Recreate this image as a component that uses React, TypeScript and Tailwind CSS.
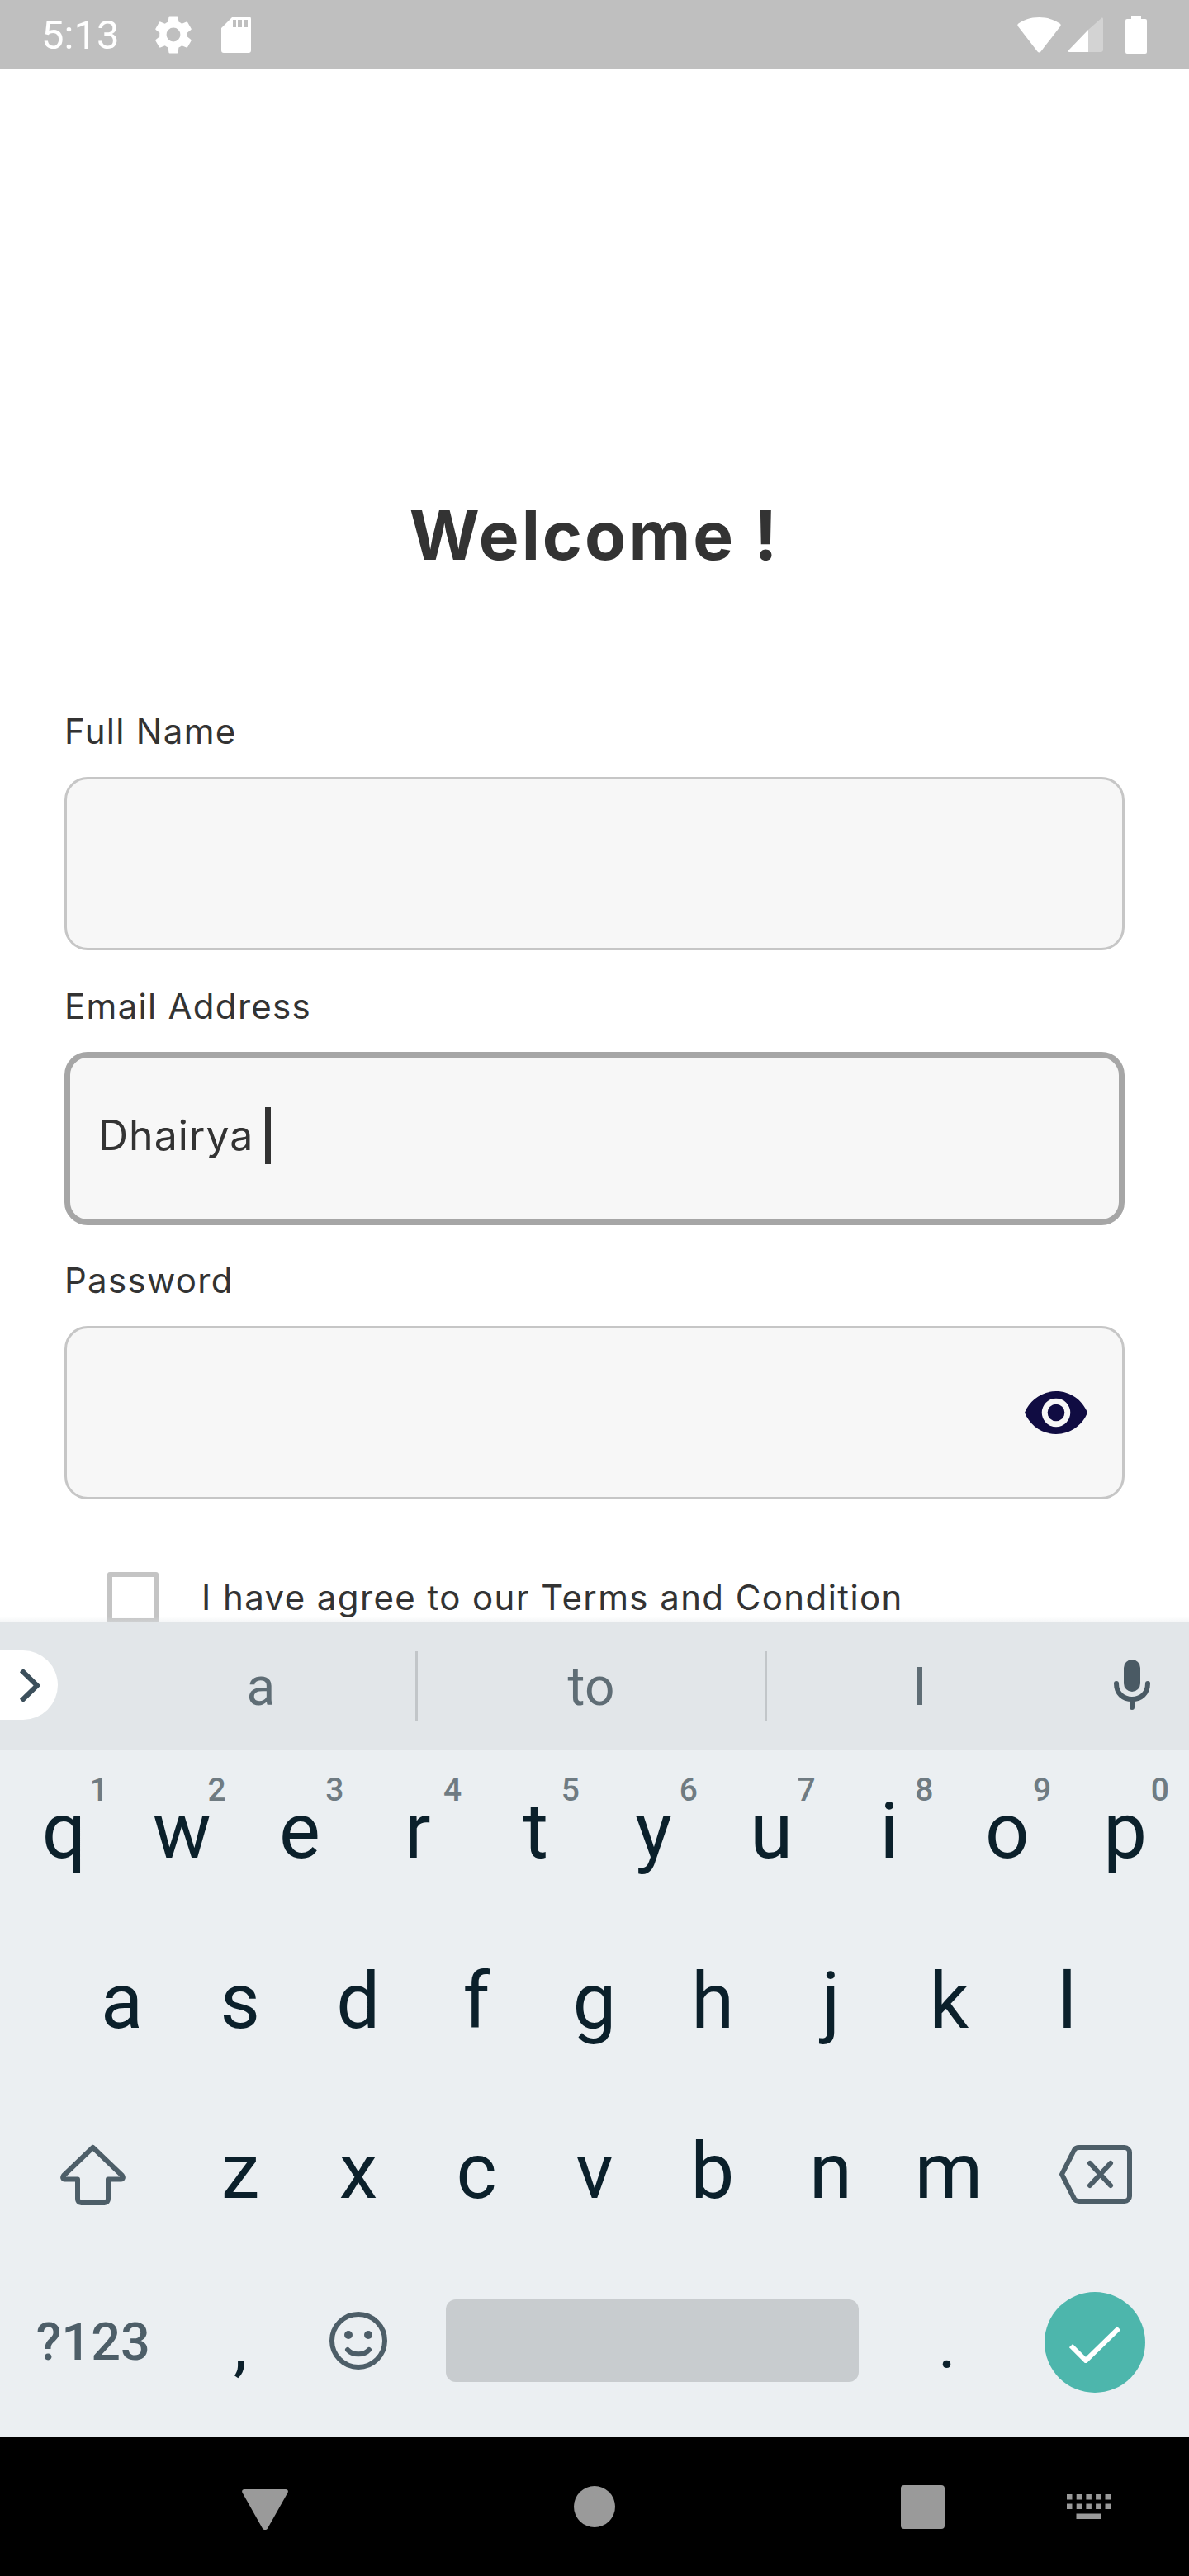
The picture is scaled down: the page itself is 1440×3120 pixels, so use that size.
import React from "react";

const Key = ({ c, sup }: { c: string; sup?: string }) => (
  <div className="relative flex items-center justify-center h-full pb-[8px]">
    <span className="text-[#0b202b] text-[94px] leading-none font-[Roboto,sans-serif]">{c}</span>
    {sup && (
      <span className="absolute right-[18px] top-[30px] text-[#6f7b82] text-[39px] leading-none font-medium font-[Roboto,sans-serif]">{sup}</span>
    )}
  </div>
);

const Field = ({ label, focused, children }: { label: string; focused?: boolean; children?: React.ReactNode }) => (
  <div className="flex flex-col">
    <label className="h-[83px] text-[#333333] text-[42px] leading-[56px] tracking-[1.3px] font-[Inter,sans-serif]">{label}</label>
    <div className={focused
      ? "h-[210px] w-[1284px] rounded-[28px] bg-[#f7f7f7] border-[7px] border-[#a6a6a6] flex items-center justify-between pl-[34px] pr-[38px] pb-[7px]"
      : "h-[210px] w-[1284px] rounded-[28px] bg-[#f7f7f7] border-[3px] border-[#c6c6c6] flex items-center justify-between pl-[38px] pr-[42px]"}>
      {children}
    </div>
  </div>
);

export default function App() {
  return (
    <div className="w-[1440px] h-[3120px] flex flex-col bg-white overflow-hidden">
      {/* status bar */}
      <div className="h-[84px] shrink-0 bg-[#bfbfbf] flex items-center pl-[50px] pr-[51px] text-white">
        <span className="text-[49px] leading-none font-[Roboto,sans-serif] w-[132px]">5:13</span>
        <svg viewBox="0 0 24 24" className="w-[56px] h-[56px] fill-white">
          <path d="M19.14 12.94c.04-.3.06-.61.06-.94 0-.32-.02-.64-.07-.94l2.03-1.58a.49.49 0 0 0 .12-.61l-1.92-3.32a.49.49 0 0 0-.59-.22l-2.39.96c-.5-.38-1.03-.7-1.62-.94l-.36-2.54a.48.48 0 0 0-.48-.41h-3.84a.48.48 0 0 0-.47.41l-.36 2.54c-.59.24-1.13.57-1.62.94l-2.39-.96a.49.49 0 0 0-.59.22L2.74 8.87c-.12.21-.08.47.12.61l2.03 1.58c-.05.3-.09.63-.09.94s.02.64.07.94l-2.03 1.58a.49.49 0 0 0-.12.61l1.92 3.32c.12.22.37.29.59.22l2.39-.96c.5.38 1.03.7 1.62.94l.36 2.54c.05.24.24.41.48.41h3.84c.24 0 .44-.17.47-.41l.36-2.54c.59-.24 1.13-.56 1.62-.94l2.39.96c.22.08.47 0 .59-.22l1.92-3.32c.12-.22.07-.47-.12-.61l-2.01-1.58zM12 15.6A3.6 3.6 0 1 1 12 8.4a3.6 3.6 0 0 1 0 7.2z" />
        </svg>
        <svg viewBox="0 0 36 44" className="w-[36px] h-[44px] fill-white ml-[30px]">
          <path fillRule="evenodd" d="M14 0h19a3 3 0 0 1 3 3v38a3 3 0 0 1-3 3H3a3 3 0 0 1-3-3V14zM14 4v9h4V4zM20 4v9h5V4zM27 4v9h5V4z" />
        </svg>
        <div className="flex-1" />
        <svg viewBox="0 0 54 44" className="w-[53px] h-[43px] fill-white mr-[8px]">
          <path d="M27 0C16 0 7 3.500 1 8c-1 .8-1 2-.3 3L25 42.500c1 1.300 3 1.300 4 0L53.300 11c.7-1 .7-2.200-.3-3C47 3.500 38 0 27 0z" />
        </svg>
        <svg viewBox="0 0 43 42" className="w-[43px] h-[42px] mr-[27px]">
          <path d="M25 15 41 1c1-1 2 0 2 1v37a3 3 0 0 1-3 3H25z" fill="#d3d3d3" />
          <path d="M25 15v27H2c-1.500 0-2-1-1-2z" fill="#ffffff" />
        </svg>
        <svg viewBox="0 0 26 46" className="w-[26px] h-[46px] fill-white">
          <path d="M7 0h12v4h5a2 2 0 0 1 2 2v38a2 2 0 0 1-2 2H2a2 2 0 0 1-2-2V6a2 2 0 0 1 2-2h5z" />
        </svg>
      </div>

      {/* form */}
      <div className="h-[1881px] shrink-0 relative overflow-hidden">
        <h1 className="text-center mt-[505px] h-[120px] text-[#333333] text-[82px] leading-[120px] tracking-[3px] font-bold font-[Inter,sans-serif]">Welcome !</h1>
        <div className="pl-[78px] flex flex-col gap-[39.5px] mt-[149px]">
          <Field label="Full Name" />
          <Field label="Email Address" focused>
            <div className="flex items-center">
              <span className="text-[#333333] text-[50px] leading-none tracking-[1px] font-[Inter,sans-serif]">Dhairya</span>
              <span className="w-[7px] h-[69px] bg-[#333333] ml-[14px]" />
            </div>
          </Field>
          <Field label="Password">
            <span />
            <svg viewBox="0 0 22 15" className="w-[76px] h-[52px] fill-[#100c42]">
              <path fillRule="evenodd" d="M11 0C6 0 1.730 3.110 0 7.500 1.730 11.890 6 15 11 15s9.270-3.110 11-7.500C20.270 3.110 16 0 11 0zm0 12.500a5 5 0 1 1 0-10 5 5 0 0 1 0 10zM11 4.500a3 3 0 1 0 0 6 3 3 0 0 0 0-6z" />
            </svg>
          </Field>
        </div>
        <div className="flex items-center pl-[130px] mt-[88px]">
          <div className="w-[62px] h-[62px] shrink-0 border-[6px] border-[#c4c4c4] rounded-[3px]" />
          <span className="ml-[52px] text-[#333333] text-[42px] leading-[62px] tracking-[1.4px] whitespace-nowrap font-[Inter,sans-serif]">I have agree to our Terms and Condition</span>
        </div>
        <div className="absolute left-0 bottom-0 w-full h-[7px] bg-gradient-to-b from-[#e2e6e900] to-[#e2e6e966]" />
      </div>

      {/* suggestion strip */}
      <div className="h-[154px] shrink-0 bg-[#e2e6e9] flex items-center relative">
        <div className="absolute left-0 top-[34px] h-[84px] w-[70px] bg-white rounded-r-[42px] flex items-center pl-[23px]">
          <svg viewBox="0 0 26 41" className="w-[26px] h-[41px] fill-none stroke-[#3c4f5b] stroke-[6]">
            <path d="M3 2l19 18.500L3 39" />
          </svg>
        </div>
        <div className="w-[506px] h-[84px] shrink-0 border-r-[3px] border-[#c2c6c9] flex items-center justify-center pl-[129px] pt-[4px]">
          <span className="text-[#5f6d75] text-[64px] leading-none font-[Roboto,sans-serif]">a</span>
        </div>
        <div className="w-[423px] h-[84px] shrink-0 border-r-[3px] border-[#c2c6c9] flex items-center justify-center pt-[4px]">
          <span className="text-[#5f6d75] text-[64px] leading-none font-[Roboto,sans-serif]">to</span>
        </div>
        <div className="w-[370px] h-[84px] shrink-0 flex items-center justify-center pt-[4px]">
          <span className="text-[#5f6d75] text-[64px] leading-none font-[Roboto,sans-serif]">I</span>
        </div>
        <svg viewBox="0 0 44 61" className="ml-[50px] w-[44px] h-[61px] -translate-y-[2px]">
          <rect x="12" y="0" width="20" height="39" rx="10" fill="#4a5a64" />
          <path d="M3 29c0 12 8 19 19 19s19-7 19-19" fill="none" stroke="#4a5a64" strokeWidth="6" strokeLinecap="round" />
          <path d="M22 48v10" stroke="#4a5a64" strokeWidth="6" strokeLinecap="round" />
        </svg>
      </div>

      {/* keyboard */}
      <div className="h-[833px] shrink-0 bg-[#ebeff2] flex flex-col px-[6px]">
        <div className="h-[206px] shrink-0 grid grid-cols-10">
          {["q","w","e","r","t","y","u","i","o","p"].map((k, i) => (
            <Key key={k} c={k} sup={String((i + 1) % 10)} />
          ))}
        </div>
        <div className="h-[206px] shrink-0 grid grid-cols-9 px-[70px]">
          {["a","s","d","f","g","h","j","k","l"].map((k) => <Key key={k} c={k} />)}
        </div>
        <div className="h-[206px] shrink-0 grid grid-cols-[213.5px_repeat(7,1fr)_213.5px]">
          <div className="flex items-center justify-center pb-[2px]">
            <svg viewBox="0 0 79 75" className="w-[79px] h-[75px] fill-none stroke-[#4d5e68] stroke-[6]">
              <path strokeLinejoin="round" d="M39.500 5 4 39c-1.500 2-1 4.500 1.500 4.500H21V67c0 3 1.500 5 4.500 5h28c3 0 4.500-2 4.500-5V43.500h15.500c2.500 0 3-2.500 1.500-4.500z" />
            </svg>
          </div>
          {["z","x","c","v","b","n","m"].map((k) => <Key key={k} c={k} />)}
          <div className="flex items-center justify-center pb-[1px]">
            <svg viewBox="0 0 88 71" className="w-[88px] h-[71px] fill-none stroke-[#4d5e68] stroke-[6]">
              <path strokeLinejoin="round" d="M24 3h55a6 6 0 0 1 6 6v53a6 6 0 0 1-6 6H24c-3 0-5-1-6-3L3 35.500 18 6c1-2 3-3 6-3z" />
              <path d="M37 22l25 27M62 22 37 49" strokeLinecap="round" />
            </svg>
          </div>
        </div>
        <div className="flex-1 flex items-center pb-[20px]">
          <div className="w-[213.5px] shrink-0 text-center text-[#4d5e68] text-[63px] leading-none font-medium font-[Roboto,sans-serif] mt-[4px]">?123</div>
          <div className="w-[143px] shrink-0 text-center text-[#0b202b] text-[85px] leading-none font-[Roboto,sans-serif] mt-[10px]">,</div>
          <div className="w-[143px] shrink-0 flex justify-center">
            <svg viewBox="0 0 70 70" className="w-[70px] h-[70px]">
              <circle cx="35" cy="35" r="32" fill="none" stroke="#4d5e68" strokeWidth="6" />
              <circle cx="23" cy="28" r="5" fill="#4d5e68" />
              <circle cx="47" cy="28" r="5" fill="#4d5e68" />
              <path d="M22 46c6 7 20 7 26 0" fill="none" stroke="#4d5e68" strokeWidth="6" strokeLinecap="round" />
            </svg>
          </div>
          <div className="w-[500px] h-[100px] shrink-0 ml-[34.5px] bg-[#c8cccf] rounded-[12px]" />
          <div className="w-[214px] shrink-0 text-center text-[#0b202b] text-[85px] leading-none font-[Roboto,sans-serif] mt-[10px]">.</div>
          <div className="w-[122px] h-[122px] shrink-0 ml-[11px] mt-[4px] rounded-full bg-[#4db6ac] flex items-center justify-center">
            <svg viewBox="0 0 62 46" className="w-[62px] h-[46px] fill-none stroke-white stroke-[6] translate-y-[2px]">
              <path d="M2 25l18 18L60 4" />
            </svg>
          </div>
        </div>
      </div>

      {/* nav bar */}
      <div className="h-[168px] shrink-0 bg-black flex items-center pl-[293px]">
        <svg viewBox="0 0 56 49" className="w-[56px] h-[49px] fill-[#9a9a9a] mt-[7px]">
          <path d="M3 0h50c2.500 0 3.500 2 2.500 4L31 47.500c-1.300 2-4.700 2-6 0L.5 4C-.5 2 .5 0 3 0z" />
        </svg>
        <div className="w-[50px] h-[50px] ml-[346px] rounded-full bg-[#9a9a9a]" />
        <div className="w-[53px] h-[53px] ml-[346px] rounded-[4px] bg-[#9a9a9a]" />
        <svg viewBox="0 0 53 30" className="w-[53px] h-[30px] ml-[148px] fill-[#9a9a9a]">
          <path d="M0 0h6.500v6.500H0zM11.700 0h6.500v6.500h-6.500zM23.400 0h6.500v6.500h-6.500zM35.100 0h6.500v6.500h-6.500zM46.500 0H53v6.500h-6.500zM0 11.500h6.500V18H0zM11.700 11.500h6.500V18h-6.500zM23.400 11.500h6.500V18h-6.500zM35.100 11.500h6.500V18h-6.500zM46.500 11.500H53V18h-6.500zM11.500 23.500h30V30h-30z" />
        </svg>
      </div>
    </div>
  );
}
